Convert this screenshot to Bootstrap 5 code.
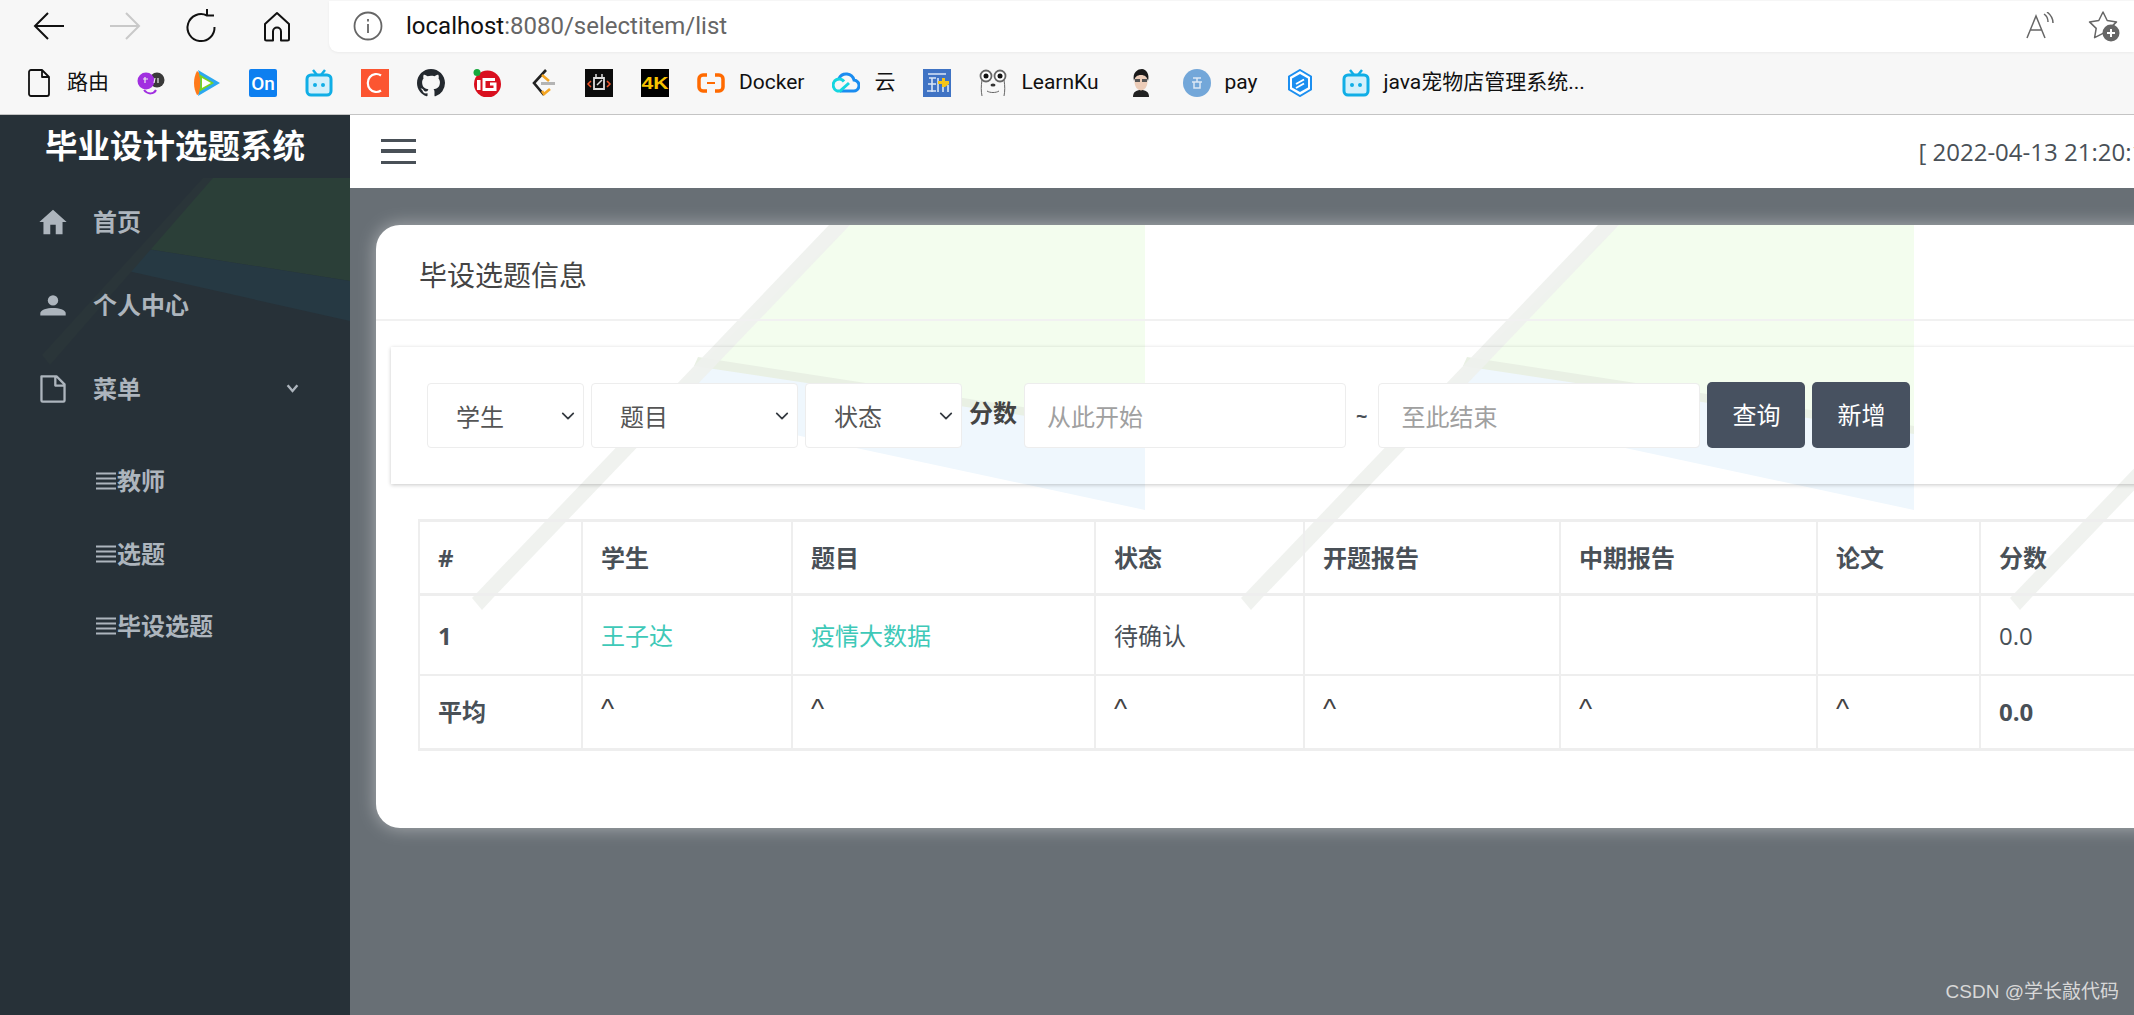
<!doctype html>
<html lang="en">
<head>
    <meta charset="UTF-8">
    <title>毕业设计选题系统</title>
    <link href="https://cdn.jsdelivr.net/npm/bootstrap@5.3.2/dist/css/bootstrap.min.css" rel="stylesheet">
    <script src="https://cdn.jsdelivr.net/npm/bootstrap@5.3.2/dist/js/bootstrap.bundle.min.js"></script>
    <style>
        html, body { height: 100%; }
        body {
            font-family: "Open Sans", "Noto Sans CJK SC", sans-serif;
            font-size: 24px;
            color: #495057;
            overflow: hidden;
            width: 2134px;
            height: 1015px;
        }
        .browser-bar { height: 115px; background: #f7f7f7; border-bottom: 1px solid #c4c4c4; font-family: Roboto, "Noto Sans CJK SC", sans-serif; color: #111; }
        .tool-row { height: 52px; padding-left: 31px; }
        .tool-btn { width: 36px; height: 36px; margin-right: 40px; flex: none; }
        .addr-box { flex: 1; height: 51px; background: #fff; border-radius: 0 0 0 9px; box-shadow: 0 1px 3px rgba(0,0,0,.05); margin-left: -6px; padding-left: 24px; padding-right: 14px; }
        .addr-url { font-size: 24px; color: #111; margin-left: 23px; }
        .addr-url span { color: #666; }
        .star-btn { margin-left: 32px; }
        .fav-row { height: 62px; padding-left: 25px; gap: 28px; font-size: 21px; }
        .fav-item { gap: 14px; white-space: nowrap; }
        .fav-icon { width: 28px; height: 28px; flex: none; display: block; }

        .app-wrap { height: 900px; }
        .side-bar { width: 350px; background: #273138; flex: none; overflow: hidden; }
        .side-art { left: 0; top: 0; width: 350px; height: 300px; }
        .side-title { height: 65px; line-height: 62px; font-size: 32.500px; font-weight: 700; color: #fff; text-align: center; position: relative; }
        .side-link { height: 83.5px; color: #adb5bd; font-weight: 700; text-decoration: none; padding-left: 38px; position: relative; }
        .side-link svg { width: 30px; height: 30px; margin-right: 25px; flex: none; }
        .side-link .side-arrow { width: 13px; height: 13px; margin: 0 0 0 auto; position: relative; left: -51px; }
        .side-sub { height: 72.7px; color: #adb5bd; font-weight: 700; text-decoration: none; padding-left: 96px; position: relative; }
        .side-sub svg { width: 20px; height: 18px; margin-right: 1px; flex: none; }
        .sub-list { margin-top: 14px; }

        .main-area { flex: 1; background: #686f75; min-width: 0; overflow: hidden; }
        .top-strip { height: 73px; background: #fff; width: 1847px; padding-left: 31px; }
        .burger { width: 35px; height: 25px; border-top: 3.5px solid #495057; border-bottom: 3.5px solid #495057; position: relative; }
        .burger::after { content: ""; position: absolute; left: 0; right: 0; top: 7.25px; height: 3.5px; background: #495057; }
        .main-card { margin: 37px 0 0 26px; width: 1800px; height: 603px; background: #fff; border-radius: 24px 0 0 24px; box-shadow: 0 0 18px rgba(255,255,255,.45); overflow: hidden; }
        .card-art { left: 0; top: 0; width: 1800px; height: 603px; }
        .card-head { height: 96px; line-height: 100px; font-size: 28px; padding-left: 43px; border-bottom: 2px solid #f1f1f1; color: #444; position: relative; }
        .search-box { margin: 26px 0 0 15px; height: 137px; padding: 36px 0 0 36px; gap: 7px; box-shadow: 0 1px 4px rgba(0,0,0,.22); position: relative; }
        .search-box .form-select, .search-box .form-control { height: 65px; border: 1px solid #ededed; border-radius: 4px; font-size: 24px; color: #555; background-color: #fff; flex: none; padding-top: 2px; }
        .search-box .form-select { padding-left: 28px; padding-right: 20px; padding-bottom: 0; width: 157px; background-position: right 6px center; background-size: 18px 14px; }
        .search-box .sel-wide { width: 207px; }
        .search-box .form-control { width: 322px; padding-left: 22px; padding-right: 22px; padding-bottom: 0; }
        .search-box .form-control::placeholder { color: #a0a0a0; }
        .score-lab { font-weight: 700; line-height: 60px; white-space: nowrap; color: #444; }
        .tilde-lab { font-weight: 700; font-size: 20px; line-height: 65px; margin: 0 4px 0 3px; }
        .search-btn { height: 66px; width: 98px; background: #475160; color: #fff; border: 0; border-radius: 5px; font-size: 24px; padding: 0; margin-top: -1px; }
        .table-pad { margin: 35px 0 0 42px; width: 1900px; position: relative; }
        .data-tbl { table-layout: fixed; width: 1900px; background: transparent; margin: 0; color: #495057; --bs-table-bg: transparent; }
        .data-tbl th, .data-tbl td { border: 2px solid #eee; padding: 0 18px; vertical-align: middle; }
        .data-tbl thead tr { height: 74px; }
        .data-tbl thead th { border-bottom-width: 3px; border-top-width: 3px; }
        .data-tbl .row-one { height: 80px; }
        .data-tbl .row-one td, .data-tbl .row-one th { padding-top: 2px; }
        .data-tbl .row-avg { height: 75px; }
        .data-tbl .row-avg th, .data-tbl .row-avg td { border-bottom-width: 3px; }
        .data-tbl a { color: #3ec9b8; text-decoration: none; }
        .data-tbl .caret-cell { font-family: "Liberation Sans", sans-serif; font-size: 28px; padding-bottom: 6px; color: #444; }
        .mark-csdn { right: 15px; bottom: 9px; color: #d8d8d8; font-size: 19px; font-family: "Liberation Sans", "Noto Sans CJK SC", sans-serif; }
        .c1 { width: 163px; } .c2 { width: 210px; } .c3 { width: 303px; } .c4 { width: 209px; }
        .c5 { width: 256px; } .c6 { width: 257px; } .c7 { width: 163px; } .c8 { width: 339px; }
    </style>
</head>
<body class="position-relative">

<!-- browser chrome -->
<div class="browser-bar">
    <div class="tool-row d-flex align-items-center">
        <svg class="tool-btn" viewBox="0 0 36 36" fill="none" stroke="#111" stroke-width="2"><path d="M33 18H4M17 5 4 18l13 13"/></svg>
        <svg class="tool-btn" viewBox="0 0 36 36" fill="none" stroke="#c9c9c9" stroke-width="2"><path d="M3 18h29M19 5l13 13-13 13"/></svg>
        <svg class="tool-btn" viewBox="0 0 36 36" fill="none" stroke="#111" stroke-width="2"><path d="M24 7.500A13.500 13.500 0 1 0 31.500 19M24 1v6.500h7"/></svg>
        <svg class="tool-btn" viewBox="0 0 36 36" fill="none" stroke="#111" stroke-width="2" stroke-linejoin="round"><path d="M18 5 6 16v15a1.500 1.500 0 0 0 1.500 1.500H14v-9a4 4 0 0 1 8 0v9h6.500A1.500 1.500 0 0 0 30 31V16z"/></svg>
        <div class="addr-box d-flex align-items-center">
            <svg width="30" height="30" viewBox="0 0 30 30" fill="none" stroke="#666" stroke-width="1.800"><circle cx="15" cy="15" r="13.500"/><path d="M15 13v9M15 8v2.500"/></svg>
            <div class="addr-url">localhost<span>:8080/selectitem/list</span></div>
            <svg class="ms-auto" width="30" height="28" viewBox="0 0 30 28" fill="none" stroke="#666" stroke-width="1.500"><path d="M1 26 10 4l9 22M4 18h12M18 2c3 2 4 5 4 8M21 0c4 3 6 7 6 11"/></svg>
            <svg class="star-btn" width="32" height="32" viewBox="0 0 32 32"><path d="M15 2l4.200 8.500 9.300 1.400-6.700 6.500 1.600 9.300L15 23.300l-8.400 4.400 1.600-9.300L1.500 11.900l9.300-1.400z" fill="none" stroke="#666" stroke-width="1.500" stroke-linejoin="round"/><circle cx="23" cy="23" r="8.500" fill="#666"/><path d="M23 19v8M19 23h8" stroke="#fff" stroke-width="2"/></svg>
        </div>
    </div>
    <div class="fav-row d-flex align-items-center">
        <div class="fav-item d-flex align-items-center">
            <svg class="fav-icon" viewBox="0 0 28 28" fill="none" stroke="#111" stroke-width="1.800" stroke-linejoin="round"><path d="M6 1h11l7 7v17a2 2 0 0 1-2 2H6a2 2 0 0 1-2-2V3a2 2 0 0 1 2-2zM17 1v7h7"/></svg>
            路由
        </div>
        <svg class="fav-icon" viewBox="0 0 28 28"><circle cx="20" cy="11" r="7.500" fill="#3a3a3a"/><circle cx="9" cy="12" r="8.500" fill="#a12fe0"/><path d="M7 21c4 5 10 4 12 0" fill="none" stroke="#a12fe0" stroke-width="2"/><path d="M6 10h5M8 8v6M18 9l-1 5M21 9v5" stroke="#eee" stroke-width="1.200"/></svg>
        <svg class="fav-icon" viewBox="0 0 28 28"><path d="M4 2C0 9 0 19 4 26l5-2V6z" fill="#ff7a1a"/><path d="M5 1 27 14 5 27C8 19 8 9 5 1z" fill="#2ba8f0"/><path d="M6 5 21 14 6 23C8 17 8 11 6 5z" fill="#7ad321"/><path d="M9 9l9 5-9 5z" fill="#fff"/></svg>
        <svg class="fav-icon" viewBox="0 0 28 28"><rect width="28" height="28" rx="2" fill="#0d7ff0"/><text x="14" y="21" text-anchor="middle" font-family="Roboto" font-weight="500" font-size="19" fill="#fff">On</text></svg>
        <svg class="fav-icon" viewBox="0 0 28 28"><path d="M8 1l4 5M20 1l-4 5" stroke="#10aee6" stroke-width="2.500"/><rect x="2" y="6" width="24" height="20" rx="4" fill="#d4f0fb" stroke="#10aee6" stroke-width="3"/><circle cx="10" cy="16" r="2" fill="#10aee6"/><circle cx="18" cy="16" r="2" fill="#10aee6"/></svg>
        <svg class="fav-icon" viewBox="0 0 28 28"><rect width="28" height="28" fill="#fc5531"/><path d="M20 6.500A8.500 9 0 1 0 20 21.500" fill="none" stroke="#fff" stroke-width="2.200"/></svg>
        <svg class="fav-icon" viewBox="0 0 16 16" fill="#24292f"><path d="M8 0C3.580 0 0 3.580 0 8c0 3.540 2.290 6.530 5.470 7.590.4.070.55-.17.55-.38v-1.340c-2.230.48-2.690-1.070-2.690-1.070-.36-.93-.89-1.170-.89-1.170-.73-.5.050-.49.050-.49.800.060 1.230.830 1.230.830.710 1.220 1.870.870 2.330.660.070-.520.280-.870.510-1.070-1.780-.2-3.640-.89-3.640-3.950 0-.870.310-1.590.820-2.150-.080-.2-.36-1.020.080-2.120 0 0 .670-.210 2.200.820A7.700 7.700 0 0 1 8 3.870c.68 0 1.360.090 2 .270 1.530-1.040 2.200-.820 2.200-.820.440 1.100.160 1.920.080 2.120.510.560.820 1.270.820 2.150 0 3.070-1.870 3.750-3.650 3.950.290.250.54.730.54 1.480v2.200c0 .210.150.460.550.380A8 8 0 0 0 16 8c0-4.420-3.580-8-8-8z"/></svg>
        <svg class="fav-icon" viewBox="0 0 28 28"><circle cx="14.500" cy="15" r="13.500" fill="#d9101f"/><circle cx="4" cy="3.500" r="3.500" fill="#16a83c"/><rect x="4" y="11" width="3.500" height="10" fill="#fff"/><path d="M22 10.500H11v10h11V15h-5" fill="none" stroke="#fff" stroke-width="3"/></svg>
        <svg class="fav-icon" viewBox="0 0 28 28" fill="none" stroke-width="2.600"><path d="M17 1 5 14l10 12" stroke="#222"/><path d="M13 6l7 6M13 22l2 3 6-5" stroke="#f5a623"/><path d="M12 14.500h14" stroke="#b4b4b4" stroke-width="3"/></svg>
        <svg class="fav-icon" viewBox="0 0 28 28"><rect width="28" height="28" fill="#0c0c0c"/><path d="M9 9h10v11H9z" fill="none" stroke="#ddd" stroke-width="1.800"/><path d="M11 5v4M17 5v4M12 16l5-5" stroke="#ddd" stroke-width="1.500"/><path d="M6 12l-3 3 3 3M22 12l3 3-3 3" fill="none" stroke="#f0552a" stroke-width="1.500"/></svg>
        <svg class="fav-icon" viewBox="0 0 28 28"><rect width="28" height="28" fill="#000"/><text x="14" y="20" text-anchor="middle" font-family="Liberation Sans" font-weight="700" font-size="17" textLength="27" lengthAdjust="spacingAndGlyphs" fill="#f7c300">4K</text></svg>
        <div class="fav-item d-flex align-items-center">
            <svg class="fav-icon" viewBox="0 0 28 28" fill="none" stroke="#ff6a00" stroke-width="3.500"><path d="M10 6H6a4 4 0 0 0-4 4v8a4 4 0 0 0 4 4h4M18 6h4a4 4 0 0 1 4 4v8a4 4 0 0 1-4 4h-4"/><path d="M10 14h8" stroke-width="2"/></svg>
            Docker
        </div>
        <div class="fav-item d-flex align-items-center">
            <svg class="fav-icon" viewBox="0 0 28 28" fill="none" stroke-width="3"><path d="M8 22h13a5.500 5.500 0 0 0 1-11 8 8 0 0 0-15-1.500" stroke="#1a8cf0"/><path d="M12 12.500A6 6 0 1 0 8 22l9-8" stroke="#15d6e0"/></svg>
            云
        </div>
        <svg class="fav-icon" viewBox="0 0 28 28"><rect width="28" height="28" fill="#3f73c4"/><path d="M5 5h18M6 9h7M9 9v14M4 22h9M5 15h8M15 9v14M20 16v7M25 16v7" stroke="#d9e6f7" stroke-width="1.600" fill="none"/><path d="M15 12h4V9h3v3h4v3l-4 3h-3v-3h-4z" fill="#f5c518"/></svg>
        <div class="fav-item d-flex align-items-center">
            <svg class="fav-icon" viewBox="0 0 28 28"><path d="M3 11c-1 6-1 11 0 16M25 11c1 6 1 11 0 16" fill="none" stroke="#666" stroke-width="1"/><path d="M8 22c3 2 9 2 12 0" fill="none" stroke="#666" stroke-width="1"/><circle cx="7" cy="7" r="5.500" fill="#fff" stroke="#666" stroke-width="1.800"/><circle cx="21" cy="7" r="5.500" fill="#fff" stroke="#666" stroke-width="1.800"/><circle cx="7" cy="7" r="2.500" fill="#111"/><circle cx="21" cy="7" r="2.500" fill="#111"/><ellipse cx="14" cy="16" rx="2.500" ry="1.500" fill="#333"/></svg>
            LearnKu
        </div>
        <svg class="fav-icon" viewBox="0 0 28 28"><path d="M6 28c0-5 3-7 8-7s8 2 8 7z" fill="#222"/><ellipse cx="14" cy="13" rx="6.500" ry="8.500" fill="#ecccb8"/><path d="M7 12C5 3 11 0 15 0s8 5 6 12c-1-4-3-6-7-6s-6 2-7 6z" fill="#1a1a1a"/><rect x="8" y="10" width="5" height="3" fill="#555"/><rect x="15" y="10" width="5" height="3" fill="#555"/></svg>
        <div class="fav-item d-flex align-items-center">
            <svg class="fav-icon" viewBox="0 0 28 28"><circle cx="14" cy="14" r="14" fill="#73a7d9"/><path d="M10 9h8M9 13h10M11 13v6h6v-6M14 9v4" fill="none" stroke="#dbe8f5" stroke-width="1.500"/></svg>
            pay
        </div>
        <svg class="fav-icon" viewBox="0 0 28 28"><path d="M14 1 25 7.500v13L14 27 3 20.500v-13z" fill="#fff" stroke="#1c8ff0" stroke-width="2"/><path d="M14 5 22 9.500v9L14 23l-8-4.500v-9z" fill="#1c8ff0"/><path d="M10 15l8-4.500M10 19l8-4.500" stroke="#fff" stroke-width="2"/></svg>
        <div class="fav-item d-flex align-items-center">
            <svg class="fav-icon" viewBox="0 0 28 28"><path d="M8 1l4 5M20 1l-4 5" stroke="#10aee6" stroke-width="2.500"/><rect x="2" y="6" width="24" height="20" rx="4" fill="#d4f0fb" stroke="#10aee6" stroke-width="3"/><circle cx="10" cy="16" r="2" fill="#10aee6"/><circle cx="18" cy="16" r="2" fill="#10aee6"/></svg>
            java宠物店管理系统...
        </div>
    </div>
</div>

<div class="app-wrap d-flex">
    <!-- sidebar -->
    <nav class="side-bar position-relative">
        <svg class="side-art position-absolute" viewBox="0 0 350 300">
            <path d="M207 63H350V166L147 134Z" fill="#2b3f38"/>
            <path d="M147 134 350 166V206L128 156Z" fill="#263943"/>
            <path d="M203 63H213L50 250 42 240Z" fill="#2a3539"/>
        </svg>
        <div class="side-title">毕业设计选题系统</div>
        <a class="side-link d-flex align-items-center" href="#">
            <svg viewBox="1 1 22 22" fill="#adb5bd"><path d="M10 21v-7h4v7h5v-9h3L12 3 2 12h3v9z"/></svg>首页
        </a>
        <a class="side-link d-flex align-items-center" href="#">
            <svg viewBox="-1 -1 26 26" fill="#adb5bd"><circle cx="12" cy="8" r="4.500"/><path d="M1 21v-2c0-3 6-4.500 11-4.500S23 16 23 19v2z"/></svg>个人中心
        </a>
        <a class="side-link d-flex align-items-center" href="#">
            <svg viewBox="-1 0 26 24" fill="none" stroke="#adb5bd" stroke-width="2" stroke-linejoin="round"><path d="M2 1h13l7 7v14a1 1 0 0 1-1 1H3a1 1 0 0 1-1-1zM14 1v8h8"/></svg>菜单
            <svg class="side-arrow" viewBox="0 0 16 16" fill="none" stroke="#adb5bd" stroke-width="3"><path d="M2 4l6 7 6-7"/></svg>
        </a>
        <div class="sub-list">
            <a class="side-sub d-flex align-items-center" href="#"><svg viewBox="0 0 20 18" stroke="#adb5bd" stroke-width="1.800"><path d="M0 1.500h20M0 6.500h20M0 11.500h20M0 16.500h20"/></svg>教师</a>
            <a class="side-sub d-flex align-items-center" href="#"><svg viewBox="0 0 20 18" stroke="#adb5bd" stroke-width="1.800"><path d="M0 1.500h20M0 6.500h20M0 11.500h20M0 16.500h20"/></svg>选题</a>
            <a class="side-sub d-flex align-items-center" href="#"><svg viewBox="0 0 20 18" stroke="#adb5bd" stroke-width="1.800"><path d="M0 1.500h20M0 6.500h20M0 11.500h20M0 16.500h20"/></svg>毕设选题</a>
        </div>
    </nav>

    <main class="main-area">
        <div class="top-strip d-flex align-items-center justify-content-between">
            <div class="burger"></div>
            <div class="pe-4">[ 2022-04-13 21:20:15 ]</div>
        </div>

        <div class="main-card position-relative">
            <!-- watermark tiles, they start at the card's left edge -->
            <svg class="card-art position-absolute" viewBox="0 0 1800 603">
                <defs>
                    <g id="artTile">
                        <path d="M474 0H769V205L326 137Z" fill="#f3fdee"/>
                        <path d="M326 140 769 207V285L280 180Z" fill="#eff7fd"/>
                        <path d="M322 132 769 201V209L318 141Z" fill="#e9f0e4"/>
                        <path d="M453 0H474L117 373 106 385 96 373Z" fill="#eef1ed" fill-opacity=".9"/>
                    </g>
                </defs>
                <use href="#artTile"/>
                <use href="#artTile" x="769"/>
                <use href="#artTile" x="1538"/>
            </svg>
            <div class="card-head">毕设选题信息</div>
            <form class="search-box d-flex align-items-start">
                <select class="form-select"><option>学生</option></select>
                <select class="form-select sel-wide"><option>题目</option></select>
                <select class="form-select"><option>状态</option></select>
                <div class="score-lab">分数</div>
                <input class="form-control" type="text" placeholder="从此开始">
                <div class="tilde-lab">~</div>
                <input class="form-control" type="text" placeholder="至此结束">
                <button class="search-btn" type="button">查询</button>
                <button class="search-btn" type="button">新增</button>
            </form>
            <div class="table-pad">
                <table class="table data-tbl">
                    <colgroup><col class="c1"><col class="c2"><col class="c3"><col class="c4"><col class="c5"><col class="c6"><col class="c7"><col class="c8"></colgroup>
                    <thead>
                    <tr><th>#</th><th>学生</th><th>题目</th><th>状态</th><th>开题报告</th><th>中期报告</th><th>论文</th><th>分数</th></tr>
                    </thead>
                    <tbody>
                    <tr class="row-one"><th>1</th><td><a href="#">王子达</a></td><td><a href="#">疫情大数据</a></td><td>待确认</td><td></td><td></td><td></td><td>0.0</td></tr>
                    <tr class="row-avg"><th>平均</th><td class="caret-cell">^</td><td class="caret-cell">^</td><td class="caret-cell">^</td><td class="caret-cell">^</td><td class="caret-cell">^</td><td class="caret-cell">^</td><th>0.0</th></tr>
                    </tbody>
                </table>
            </div>
        </div>
    </main>
</div>

<div class="mark-csdn position-absolute">CSDN @学长敲代码</div>
</body>
</html>
